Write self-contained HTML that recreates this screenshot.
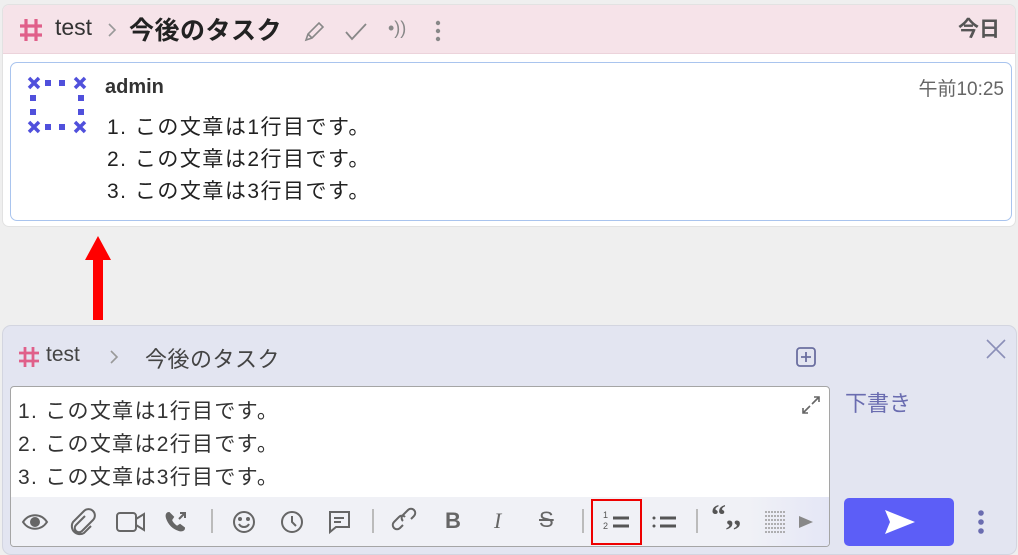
<!DOCTYPE html>
<html><head><meta charset="utf-8"><style>
*{box-sizing:border-box;margin:0;padding:0}
body{width:1018px;height:550px;background:#efefef;font-family:"Liberation Sans","Noto Sans CJK JP",sans-serif;position:relative;overflow:hidden;color:#222}
.abs{position:absolute}
.card{left:2px;top:4px;width:1014px;height:223px;background:#fff;border:1px solid #e2e2e2;border-radius:7px;overflow:hidden}
.hdr{left:0;top:0;width:1014px;height:49px;background:#f6e3e9;border-bottom:1px solid #ecd3db}
.msg{left:7px;top:57px;width:1002px;height:159px;border:1px solid #a9c4ee;border-radius:7px;background:#fff}
.comp{left:2px;top:325px;width:1015px;height:230px;background:#e3e5f1;border:1px solid #d3d5e0;border-radius:9px}
.ed{left:7px;top:60px;width:820px;height:161px;background:#fff;border:1px solid #a5a5a5;border-radius:4px;overflow:hidden}
.tb{left:0;top:110px;width:820px;height:50px;background:linear-gradient(90deg,#f0f1f6 0,#f0f1f6 90%,#e4e6f6 100%)}
.line{font-size:21px;letter-spacing:1.3px;color:#333;position:absolute;left:7px}
svg{position:absolute}
</style></head><body>
<div class="abs card">
 <div class="abs hdr">
  <svg style="left:15px;top:12px" width="26" height="26" viewBox="0 0 26 26" stroke="#e0608a" stroke-width="3.2" fill="none"><path d="M8 2v22M18 2v22M2 9h22M2 18h22"/></svg>
  <div class="abs" style="left:52px;top:9px;font-size:23px;color:#333">test</div>
  <svg style="left:104px;top:17px" width="10" height="16" viewBox="0 0 10 16" stroke="#999" stroke-width="1.6" fill="none"><path d="M2 2l6 6-6 6"/></svg>
  <div class="abs" style="left:126px;top:6px;font-size:25px;font-weight:bold;color:#222;letter-spacing:0.5px">今後のタスク</div>
  <svg style="left:298px;top:14px" width="26" height="26" viewBox="0 0 26 26" stroke="#888" stroke-width="1.6" fill="none"><path d="M5 21l2-6L18 4l4 4-11 11z M7 15l4 4"/></svg>
  <svg style="left:340px;top:14px" width="26" height="26" viewBox="0 0 26 26" stroke="#888" stroke-width="1.8" fill="none"><path d="M3 13l6 7L23 5"/></svg>
  <div class="abs" style="left:385px;top:13px;font-size:18px;color:#888">•))</div>
  <svg style="left:430px;top:14px" width="10" height="24" viewBox="0 0 10 24" fill="#888"><circle cx="5" cy="4" r="2.2"/><circle cx="5" cy="12" r="2.2"/><circle cx="5" cy="20" r="2.2"/></svg>
  <div class="abs" style="left:955px;top:8px;font-size:21px;font-weight:bold;color:#555">今日</div>
 </div>
 <div class="abs msg">
  <svg style="left:15px;top:13px" width="62" height="58" viewBox="0 0 62 58" fill="#5050dc"><path d="M3 2l10 10M13 2L3 12M49 2l10 10M59 2L49 12M3 46l10 10M13 46L3 56M49 46l10 10M59 46L49 56" stroke="#5050dc" stroke-width="3.5"/><rect x="19" y="4" width="6" height="6"/><rect x="33" y="4" width="6" height="6"/><rect x="19" y="48" width="6" height="6"/><rect x="33" y="48" width="6" height="6"/><rect x="4" y="19" width="6" height="6"/><rect x="4" y="33" width="6" height="6"/><rect x="52" y="19" width="6" height="6"/><rect x="52" y="33" width="6" height="6"/></svg>
  <div class="abs" style="left:94px;top:13px;font-size:20px;font-weight:bold;color:#333">admin</div>
  <div class="abs" style="right:7px;top:11px;font-size:19px;color:#666">午前10:25</div>
  <div class="abs" style="left:96px;top:49px;font-size:21px;letter-spacing:1.5px;line-height:32px;color:#222">1.&nbsp;この文章は1行目です。<br>2.&nbsp;この文章は2行目です。<br>3.&nbsp;この文章は3行目です。</div>
 </div>
</div>
<svg style="left:84px;top:236px" width="28" height="86" viewBox="0 0 28 86"><path d="M14 0L27 24H19V84H9V24H1z" fill="#f00"/></svg>
<div class="abs comp">
 <svg style="left:15px;top:20px" width="22" height="22" viewBox="0 0 22 22" stroke="#e0608a" stroke-width="2.8" fill="none"><path d="M7 1v20M15 1v20M1 7h20M1 15h20"/></svg>
 <div class="abs" style="left:43px;top:17px;font-size:21px;color:#444">test</div>
 <svg style="left:106px;top:23px" width="10" height="16" viewBox="0 0 10 16" stroke="#999" stroke-width="1.6" fill="none"><path d="M2 2l6 6-6 6"/></svg>
 <div class="abs" style="left:142px;top:16px;font-size:22px;color:#444;letter-spacing:0.5px">今後のタスク</div>
 <svg style="left:792px;top:20px" width="22" height="22" viewBox="0 0 22 22" stroke="#6b6fa0" stroke-width="1.8" fill="none"><rect x="2" y="2" width="18" height="18" rx="3"/><path d="M11 6v10M6 11h10"/></svg>
 <svg style="left:982px;top:12px" width="22" height="22" viewBox="0 0 22 22" stroke="#8b8fb8" stroke-width="1.6" fill="none"><path d="M2 2l18 18M20 2L2 20"/></svg>
 <div class="abs ed">
  <div class="line" style="top:8px">1. この文章は1行目です。</div>
  <div class="line" style="top:41px">2. この文章は2行目です。</div>
  <div class="line" style="top:74px">3. この文章は3行目です。</div>
  <svg style="left:790px;top:8px" width="20" height="20" viewBox="0 0 20 20" stroke="#666" stroke-width="1.6" fill="none"><path d="M11 9l7-7M13 2h5v5M9 11l-7 7M2 13v5h5"/></svg>
  <div class="abs tb">
   <svg style="left:0;top:0" width="820" height="50" viewBox="0 0 820 50" stroke="#666" stroke-width="2" fill="none">
    <path d="M12 25c6-9 18-9 24 0c-6 9-18 9-24 0z"/><circle cx="24" cy="25" r="4" fill="#666"/>
    <path d="M74 19l-9 9a4 4 0 0 0 6 6l11-11a6 6 0 0 0-9-9L62 25a8 8 0 0 0 11 11l7-7"/>
    <rect x="106" y="16" width="19" height="18" rx="3"/><path d="M125 22l8-5v16l-8-5"/>
    <path d="M158 16c-2 0-3 2-2 5c2 6 6 10 12 12c3 1 5 0 5-2l-4-3-3 2c-3-2-5-4-6-7l2-3z" fill="#666"/><path d="M168 22l6-6M169 16h5v5"/>
    <path d="M201 12v24" stroke="#bbb"/>
    <circle cx="233" cy="25" r="10"/><path d="M228 27c2 4 8 4 10 0"/><circle cx="229" cy="22" r="1" fill="#666"/><circle cx="237" cy="22" r="1" fill="#666"/>
    <circle cx="281" cy="25" r="10"/><path d="M281 19v6l4 4"/>
    <path d="M319 15h19v15h-13l-6 5z"/><path d="M323 21h10M323 25h7"/>
    <path d="M362 12v24" stroke="#bbb"/>
    <path d="M392 28l-3 3a4 4 0 0 1-6-6l5-5a4 4 0 0 1 6 0M400 22l3-3a4 4 0 0 0-6-6l-5 5a4 4 0 0 0 0 6"/>
    <path d="M572 12v24" stroke="#bbb"/>
    <path d="M686 12v24" stroke="#bbb"/>
   </svg>
   <div class="abs" style="left:434px;top:11px;font-size:22px;font-weight:bold;color:#666">B</div>
   <div class="abs" style="left:483px;top:11px;font-size:22px;font-style:italic;color:#666;font-family:'Liberation Serif',serif">I</div>
   <div class="abs" style="left:528px;top:10px;font-size:22px;color:#666;text-decoration:line-through">S</div>
   <div class="abs" style="left:580px;top:2px;width:51px;height:46px;border:2px solid #e00"></div>
   <div class="abs" style="left:592px;top:13px;font-size:9px;line-height:11px;color:#555">1<br>2</div>
   <svg style="left:600px;top:16px" width="20" height="18" viewBox="0 0 20 18" stroke="#555" stroke-width="3"><path d="M2 5h16M2 13h16"/></svg>
   <svg style="left:640px;top:16px" width="28" height="18" viewBox="0 0 28 18" stroke="#555" stroke-width="3"><circle cx="3" cy="5" r="1.5" fill="#555" stroke="none"/><circle cx="3" cy="13" r="1.5" fill="#555" stroke="none"/><path d="M9 5h16M9 13h16"/></svg>
   <div class="abs" style="left:700px;top:2px;font-size:30px;font-weight:bold;color:#555;font-family:'Liberation Serif',serif">“,,</div>
   <svg style="left:752px;top:13px" width="24" height="24" viewBox="0 0 24 24" stroke="#999" stroke-width="1.5" stroke-dasharray="2 1" fill="none"><path d="M2 2h20M2 6h20M2 10h20M2 14h20M2 18h20M2 22h20"/></svg>
   <svg style="left:788px;top:19px" width="14" height="12" viewBox="0 0 14 12" fill="#888"><path d="M0 0l14 6-14 6z"/></svg>
  </div>
 </div>
 <div class="abs" style="left:842px;top:60px;font-size:22px;color:#6a6cb0">下書き</div>
 <div class="abs" style="left:841px;top:172px;width:110px;height:48px;background:#5c5ef7;border-radius:5px"></div>
 <svg style="left:880px;top:182px" width="34" height="28" viewBox="0 0 34 28" fill="#fff"><path d="M2 2l30 12L2 26l5-12z"/></svg>
 <svg style="left:973px;top:182px" width="10" height="28" viewBox="0 0 10 28" fill="#6a6cb0"><circle cx="5" cy="5" r="2.8"/><circle cx="5" cy="14" r="2.8"/><circle cx="5" cy="23" r="2.8"/></svg>
</div>
</body></html>
